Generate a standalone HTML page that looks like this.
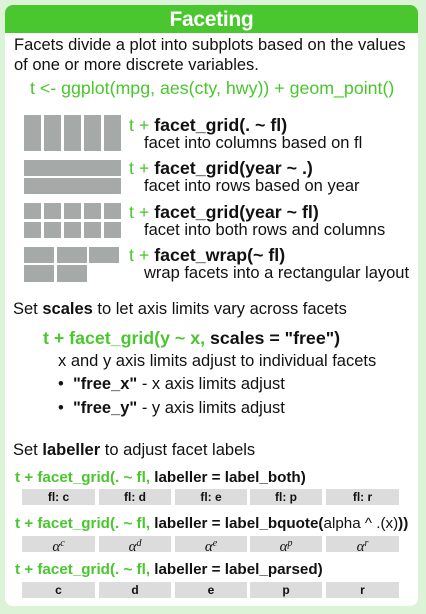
<!DOCTYPE html>
<html><head><meta charset="utf-8"><style>
*{margin:0;padding:0;box-sizing:border-box}
body{width:426px;height:614px;background:#ddf3d7;position:relative;overflow:hidden;font-family:"Liberation Sans",sans-serif;color:#111}
#card{position:absolute;left:5px;top:5px;width:413px;height:601px;background:#fff;border-radius:8px}
#hd{position:absolute;left:5px;top:5px;width:413px;height:28px;background:#4ac62e;border-radius:8px 8px 0 0;color:#fff;font-weight:bold;font-size:21px;text-align:center;line-height:30px;letter-spacing:-0.3px}
.t{position:absolute;white-space:nowrap;font-size:16.5px;letter-spacing:0;line-height:18px}
.g{color:#4ac62e}
.b{font-weight:bold}
.c{font-size:17.8px;letter-spacing:0}
.r{position:absolute;background:#a5a9a7}
.s{position:absolute;background:#dcdcdc;font-size:12px;font-weight:bold;text-align:center;line-height:16px;height:16px}
.a{font-family:"Liberation Serif",serif;font-style:italic;font-weight:normal;font-size:15px}
.a sup{font-size:10px;vertical-align:5px}
.l{font-size:15.2px;letter-spacing:0}
</style></head><body>
<div id="card"></div>
<div id="hd">Faceting</div>
<div class="t" style="left:14px;top:36px">Facets divide a plot into subplots based on the values</div>
<div class="t" style="left:14px;top:56px">of one or more discrete variables.</div>
<div class="t g" style="left:30px;top:79px;font-size:17.8px;letter-spacing:0">t &lt;- ggplot(mpg, aes(cty, hwy)) + geom_point()</div>

<div class="r" style="left:24px;top:115px;width:17px;height:36px"></div>
<div class="r" style="left:44px;top:115px;width:17px;height:36px"></div>
<div class="r" style="left:64px;top:115px;width:17px;height:36px"></div>
<div class="r" style="left:84px;top:115px;width:17px;height:36px"></div>
<div class="r" style="left:104px;top:115px;width:17px;height:36px"></div>
<div class="r" style="left:24px;top:160px;width:97px;height:16px"></div>
<div class="r" style="left:24px;top:178px;width:97px;height:16px"></div>
<div class="r" style="left:24px;top:203px;width:17px;height:16px"></div>
<div class="r" style="left:44px;top:203px;width:17px;height:16px"></div>
<div class="r" style="left:64px;top:203px;width:17px;height:16px"></div>
<div class="r" style="left:84px;top:203px;width:17px;height:16px"></div>
<div class="r" style="left:104px;top:203px;width:17px;height:16px"></div>
<div class="r" style="left:24px;top:222px;width:17px;height:16px"></div>
<div class="r" style="left:44px;top:222px;width:17px;height:16px"></div>
<div class="r" style="left:64px;top:222px;width:17px;height:16px"></div>
<div class="r" style="left:84px;top:222px;width:17px;height:16px"></div>
<div class="r" style="left:104px;top:222px;width:17px;height:16px"></div>
<div class="r" style="left:24px;top:247px;width:30px;height:16px"></div>
<div class="r" style="left:57px;top:247px;width:30px;height:16px"></div>
<div class="r" style="left:89px;top:247px;width:30px;height:16px"></div>
<div class="r" style="left:24px;top:265px;width:30px;height:17px"></div>
<div class="r" style="left:57px;top:265px;width:30px;height:17px"></div>

<div class="t c" style="left:129px;top:116px"><span class="g">t + </span><b>facet_grid(. ~ fl)</b></div>
<div class="t" style="left:144px;top:134px">facet into columns based on fl</div>
<div class="t c" style="left:129px;top:159px"><span class="g">t + </span><b>facet_grid(year ~ .)</b></div>
<div class="t" style="left:144px;top:177px">facet into rows based on year</div>
<div class="t c" style="left:129px;top:203px"><span class="g">t + </span><b>facet_grid(year ~ fl)</b></div>
<div class="t" style="left:144px;top:221px">facet into both rows and columns</div>
<div class="t c" style="left:129px;top:246px"><span class="g">t + </span><b>facet_wrap(~ fl)</b></div>
<div class="t" style="left:144px;top:264px">wrap facets into a rectangular layout</div>

<div class="t" style="left:13px;top:300px">Set <b>scales</b> to let axis limits vary across facets</div>
<div class="t c" style="left:43px;top:329px"><span class="g b">t + facet_grid(y ~ x, </span><b>scales = "free")</b></div>
<div class="t" style="left:58px;top:352px">x and y axis limits adjust to individual facets</div>
<div class="t" style="left:58px;top:375px">• &nbsp;<b>"free_x"</b> - x axis limits adjust</div>
<div class="t" style="left:58px;top:399px">• &nbsp;<b>"free_y"</b> - y axis limits adjust</div>

<div class="t" style="left:13px;top:441px">Set <b>labeller</b> to adjust facet labels</div>

<div class="t b l" style="left:15px;top:469px"><span class="g">t + facet_grid(. ~ fl,</span> labeller = label_both)</div>
<div class="s" style="left:22px;top:489px;width:73px">fl: c</div>
<div class="s" style="left:99px;top:489px;width:72px">fl: d</div>
<div class="s" style="left:175px;top:489px;width:72px">fl: e</div>
<div class="s" style="left:250px;top:489px;width:72px">fl: p</div>
<div class="s" style="left:326px;top:489px;width:73px">fl: r</div>

<div class="t b l" style="left:15px;top:515px"><span class="g">t + facet_grid(. ~ fl,</span> labeller = label_bquote(<span style="font-weight:normal">alpha ^ .(x)</span>))</div>
<div class="s" style="left:22px;top:536px;width:73px"><span class="a">α<sup>c</sup></span></div>
<div class="s" style="left:99px;top:536px;width:72px"><span class="a">α<sup>d</sup></span></div>
<div class="s" style="left:175px;top:536px;width:72px"><span class="a">α<sup>e</sup></span></div>
<div class="s" style="left:250px;top:536px;width:72px"><span class="a">α<sup>p</sup></span></div>
<div class="s" style="left:326px;top:536px;width:73px"><span class="a">α<sup>r</sup></span></div>

<div class="t b l" style="left:15px;top:561px"><span class="g">t + facet_grid(. ~ fl,</span> labeller = label_parsed)</div>
<div class="s" style="left:22px;top:582px;width:73px">c</div>
<div class="s" style="left:99px;top:582px;width:72px">d</div>
<div class="s" style="left:175px;top:582px;width:72px">e</div>
<div class="s" style="left:250px;top:582px;width:72px">p</div>
<div class="s" style="left:326px;top:582px;width:73px">r</div>
</body></html>
